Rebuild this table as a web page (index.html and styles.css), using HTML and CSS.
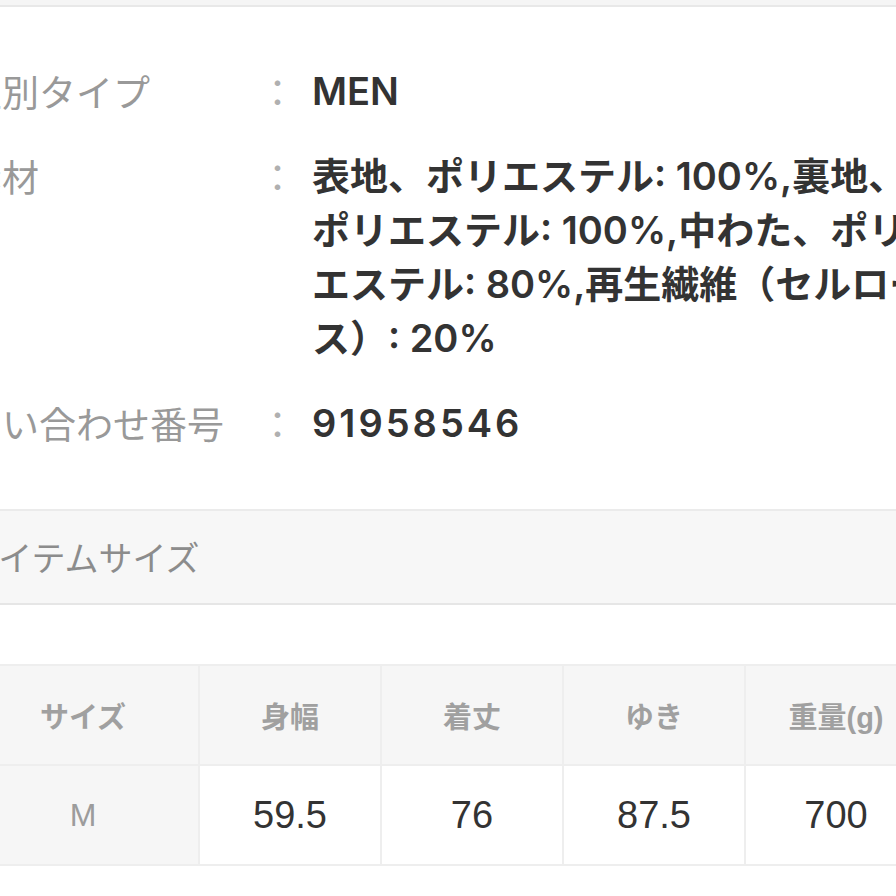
FILE: index.html
```html
<!DOCTYPE html>
<html lang="ja">
<head>
<meta charset="utf-8">
<title>アイテム詳細</title>
<link rel="stylesheet" href="styles.css">
</head>
<body>
<div class="topbar"></div>
<div class="page">
  <dl class="specs">
    <dt class="label">性別タイプ</dt>
    <dd class="colon">：</dd>
    <dd class="value">MEN</dd>

    <dt class="label">素材</dt>
    <dd class="colon">：</dd>
    <dd class="value">表地、ポリエステル: 100%,裏地、ポリエステル: 100%,中わた、ポリエステル: 80%,再生繊維（セルロース）: 20%</dd>

    <dt class="label">問い合わせ番号</dt>
    <dd class="colon">：</dd>
    <dd class="value value-id">91958546</dd>
  </dl>

  <h2 class="section-title">アイテムサイズ</h2>

  <table class="size-table">
    <colgroup>
      <col class="col-first">
      <col class="col">
      <col class="col">
      <col class="col">
      <col class="col">
    </colgroup>
    <thead>
      <tr>
        <th>サイズ</th>
        <th>身幅</th>
        <th>着丈</th>
        <th>ゆき</th>
        <th>重量(g)</th>
      </tr>
    </thead>
    <tbody>
      <tr>
        <th class="size-name">M</th>
        <td>59.5</td>
        <td>76</td>
        <td>87.5</td>
        <td>700</td>
      </tr>
    </tbody>
  </table>
</div>
</body>
</html>
```

FILE: styles.css
```css
html, body {
  margin: 0;
  padding: 0;
  background: #ffffff;
}

body {
  width: 896px;
  height: 896px;
  overflow: hidden;
  font-family: "Liberation Sans", "Noto Sans CJK JP", sans-serif;
}

.topbar {
  height: 5px;
  background: #f5f5f5;
  border-bottom: 2px solid #e8e8e8;
}

.page {
  margin-left: -35px;
  width: 1000px;
}

.specs {
  margin: 0;
  padding-top: 57px;
  display: grid;
  grid-template-columns: 294px 53px 624px;
  row-gap: 31px;
  line-height: 54px;
}

.label {
  margin: 0;
  font-family: "Noto Sans CJK JP", sans-serif;
  font-size: 37px;
  color: #999999;
  white-space: nowrap;
}

.colon {
  margin: 0;
  font-family: "Noto Sans CJK JP", sans-serif;
  font-size: 37px;
  color: #b0b0b0;
}

.value {
  margin: 0;
  font-family: Inter, "Noto Sans CJK JP", sans-serif;
  font-size: 38px;
  font-weight: 600;
  color: #333333;
}

.value-id {
  letter-spacing: 3px;
}

.section-title {
  margin: 59px 0 0 0;
  height: 92px;
  line-height: 92px;
  padding-left: 1px;
  background: #f7f7f7;
  border-top: 2px solid #ebebeb;
  border-bottom: 2px solid #e6e6e6;
  font-family: "Noto Sans CJK JP", sans-serif;
  font-weight: 400;
  font-size: 34px;
  color: #8c8c8c;
}

.size-table {
  margin: 59px 0 0 1px;
  border-collapse: collapse;
  table-layout: fixed;
  width: 960px;
}

.col-first {
  width: 232px;
}

.col {
  width: 182px;
}

.size-table th,
.size-table td {
  height: 98px;
  padding: 0;
  text-align: center;
  vertical-align: middle;
  border: 2px solid #eeeeee;
}

.size-table thead th {
  background: #f6f6f6;
  font-family: "Liberation Sans", "Noto Sans CJK JP", sans-serif;
  font-size: 29px;
  font-weight: 700;
  color: #a0a0a0;
}

.size-table .size-name {
  background: #f6f6f6;
  font-size: 32px;
  font-weight: 400;
  color: #9c9c9c;
}

.size-table td {
  background: #ffffff;
  font-size: 38px;
  color: #333333;
}
```
